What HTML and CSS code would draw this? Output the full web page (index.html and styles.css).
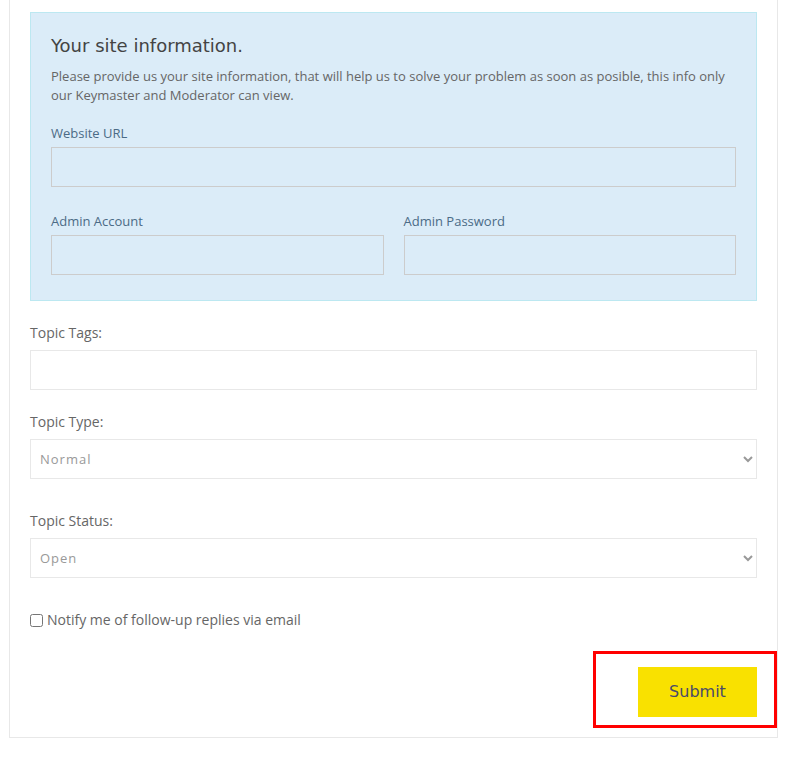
FILE: index.html
```html
<!DOCTYPE html>
<html lang="en">
<head>
<meta charset="utf-8">
<title>New Topic</title>
<link rel="stylesheet" href="styles.css">
</head>
<body>
<div class="panel">
  <form class="topic-form">
    <div class="site-info">
      <h3 class="site-title">Your site information.</h3>
      <p class="site-desc">Please provide us your site information, that will help us to solve your problem as soon as posible, this info only our Keymaster and Moderator can view.</p>
      <div class="field">
        <label class="info-label">Website URL</label>
        <input class="info-input" type="text">
      </div>
      <div class="field-row">
        <div class="field">
          <label class="info-label">Admin Account</label>
          <input class="info-input" type="text">
        </div>
        <div class="field">
          <label class="info-label">Admin Password</label>
          <input class="info-input" type="password">
        </div>
      </div>
    </div>

    <div class="form-group tags-group">
      <label class="form-label">Topic Tags:</label>
      <input class="form-input" type="text">
    </div>

    <div class="form-group type-group">
      <label class="form-label">Topic Type:</label>
      <select class="form-select"><option>Normal</option></select>
    </div>

    <div class="form-group status-group">
      <label class="form-label">Topic Status:</label>
      <select class="form-select"><option>Open</option></select>
    </div>

    <label class="notify"><input class="notify-box" type="checkbox"><span>Notify me of follow-up replies via email</span></label>

    <div class="submit-row">
      <span class="highlight"></span>
      <button class="submit-btn" type="button">Submit</button>
    </div>
  </form>
</div>
</body>
</html>
```
FILE: styles.css
```css
* { box-sizing: border-box; }
html, body { margin: 0; padding: 0; background: #fff; }
body {
  font-family: "Open Sans", "Liberation Sans", sans-serif;
  color: #666;
}
.panel {
  margin-left: 9px;
  width: 769px;
  border: 1px solid #e8e8e8;
  border-top: none;
  padding: 12px 20px 20px;
}
.topic-form { display: flex; flex-direction: column; }

.site-info {
  background: #dbecf8;
  border: 1px solid #bce8f1;
  padding: 22px 20px 25px;
}
.site-title {
  margin: 0;
  font-family: "DejaVu Sans", sans-serif;
  font-weight: 400;
  font-size: 18px;
  line-height: 22px;
  color: #444;
}
.site-desc {
  margin: 10px 0 0;
  font-size: 13px;
  line-height: 19px;
  color: #666;
}
.field { display: flex; flex-direction: column; }
.site-desc + .field { margin-top: 19px; }
.info-label {
  font-size: 13px;
  line-height: 19px;
  color: #4b6b86;
  margin-bottom: 4px;
}
.info-input {
  height: 40px;
  width: 100%;
  border: 1px solid #ccc;
  background: transparent;
  margin: 0;
  font: inherit;
}
.field-row {
  display: grid;
  grid-template-columns: 1fr 1fr;
  gap: 20px;
  margin-top: 25px;
}

.form-group { display: flex; flex-direction: column; }
.tags-group { margin-top: 22px; }
.type-group { margin-top: 22px; }
.status-group { margin-top: 32px; }
.form-label {
  font-size: 14px;
  line-height: 20px;
  color: #666;
  margin-bottom: 7px;
}
.form-input, .form-select {
  height: 40px;
  width: 100%;
  border: 1px solid #e8e8e8;
  border-radius: 0;
  background: #fff;
  margin: 0;
}
.form-select {
  padding: 0 5px;
  font-family: "Open Sans", sans-serif;
  font-size: 13px;
  letter-spacing: 1px;
  color: #999;
  font-weight: 500;
}

.notify {
  display: flex;
  align-items: center;
  margin-top: 32px;
  font-size: 14px;
  line-height: 20px;
  color: #666;
}
.notify-box {
  width: 13px;
  height: 13px;
  margin: 0 4px 0 0;
}

.submit-row {
  position: relative;
  display: flex;
  justify-content: flex-end;
  margin-top: 37px;
}
.submit-btn {
  width: 119px;
  height: 50px;
  border: none;
  background: #f9e100;
  font-family: "DejaVu Sans", sans-serif;
  font-size: 16px;
  font-weight: 400;
  color: #4a4a6a;
  padding: 0 0 2px;
  cursor: pointer;
}
.highlight {
  position: absolute;
  top: -16px;
  right: -20px;
  width: 184px;
  height: 77px;
  border: 3px solid #f00;
}
```
